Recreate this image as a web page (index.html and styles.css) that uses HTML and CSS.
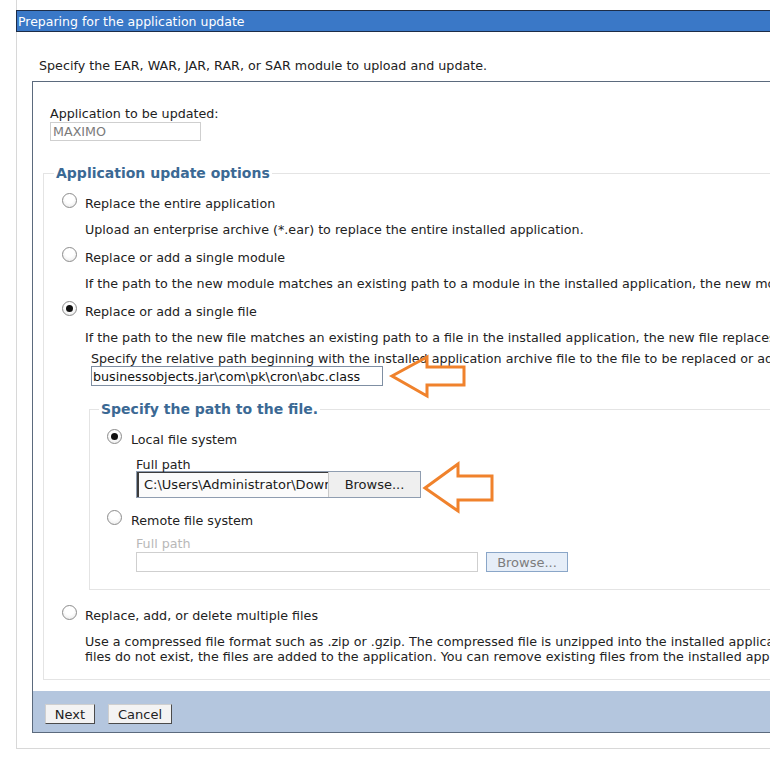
FILE: index.html
```html
<!DOCTYPE html>
<html lang="en">
<head>
    <meta charset="UTF-8">
    <title>Preparing for the application update</title>
    <link rel="stylesheet" href="styles.css">
</head>
<body>

    <div class="frame">
        <div class="title-bar">Preparing for the application update</div>

        <p class="intro">Specify the EAR, WAR, JAR, RAR, or SAR module to upload and update.</p>

        <div class="panel">
            <div class="panel-body">
                <label class="field-label">Application to be updated:</label>
                <input type="text" class="app-name" value="MAXIMO" disabled>

                <fieldset class="group">
                    <legend>Application update options</legend>

                    <div class="option first">
                        <div class="option-head">
                            <input type="radio" name="updateType" class="radio">
                            <span>Replace the entire application</span>
                        </div>
                        <div class="option-desc">Upload an enterprise archive (*.ear) to replace the entire installed application.</div>
                    </div>

                    <div class="option">
                        <div class="option-head">
                            <input type="radio" name="updateType" class="radio">
                            <span>Replace or add a single module</span>
                        </div>
                        <div class="option-desc">If the path to the new module matches an existing path to a module in the installed application, the new module replaces the existing module.</div>
                    </div>

                    <div class="option">
                        <div class="option-head">
                            <input type="radio" name="updateType" class="radio" checked>
                            <span>Replace or add a single file</span>
                        </div>
                        <div class="option-desc">If the path to the new file matches an existing path to a file in the installed application, the new file replaces the existing file.</div>

                        <div class="sub-field">
                            <div class="sub-label">Specify the relative path beginning with the installed application archive file to the file to be replaced or added.</div>
                            <input type="text" class="rel-path" value="businessobjects.jar\com\pk\cron\abc.class">
                        </div>

                        <fieldset class="group inner">
                            <legend>Specify the path to the file.</legend>

                            <div class="option-head source first">
                                <input type="radio" name="source" class="radio" checked>
                                <span>Local file system</span>
                            </div>
                            <div class="path-field">
                                <div class="path-label">Full path</div>
                                <div class="file-input">
                                    <span class="file-name">C:\Users\Administrator\Downloads\abc.class</span>
                                    <span class="file-browse">Browse...</span>
                                </div>
                            </div>

                            <div class="option-head source">
                                <input type="radio" name="source" class="radio">
                                <span>Remote file system</span>
                            </div>
                            <div class="path-field disabled">
                                <div class="path-label">Full path</div>
                                <div class="remote-row">
                                    <input type="text" class="remote-path" disabled>
                                    <button class="remote-browse" disabled>Browse...</button>
                                </div>
                            </div>
                        </fieldset>
                    </div>

                    <div class="option multi">
                        <div class="option-head">
                            <input type="radio" name="updateType" class="radio">
                            <span>Replace, add, or delete multiple files</span>
                        </div>
                        <div class="option-desc">
                            <span class="line">Use a compressed file format such as .zip or .gzip. The compressed file is unzipped into the installed application directory. If the</span>
                            <span class="line">files do not exist, the files are added to the application. You can remove existing files from the installed application by specifying metadata.</span>
                        </div>
                    </div>
                </fieldset>
            </div>

            <div class="panel-footer">
                <button class="btn next">Next</button>
                <button class="btn cancel">Cancel</button>
            </div>
        </div>
    </div>

    <!-- annotation arrows drawn over the screenshot -->
    <svg class="callouts" width="770" height="767" viewBox="0 0 770 767">
        <polygon points="392,376 427,357 427,367 464,367 464,385 427,385 427,396" />
        <polygon points="425,488 458,464 458,476 492,476 492,500 458,500 458,511" />
    </svg>

</body>
</html>
```

FILE: styles.css
```css
html, body {
    overflow: hidden;
}

body {
    margin: 0;
    font-family: "DejaVu Sans", Verdana, sans-serif;
    font-size: 12.7px;
    line-height: 15px;
    color: #222;
    background-color: #fff;
    position: relative;
}

.frame {
    width: 1200px;
    margin-left: 16px;
    padding-top: 10px;
    padding-bottom: 15px;
    border-left: 1px solid #d8d8d8;
    border-bottom: 1px solid #d8d8d8;
}

.title-bar {
    margin-left: -1px;
    height: 20px;
    line-height: 21px;
    padding-left: 1px;
    background-color: #3a78c7;
    border: 1px solid #1d2d47;
    color: #fff;
    font-size: 12.5px;
}

.intro {
    margin: 26px 0 8px 22px;
}

.panel {
    margin-left: 15px;
    border: 1px solid #5b6a7d;
    background-color: #fff;
}

.panel-body {
    padding: 24px 0 11px 17px;
}

.field-label {
    display: block;
}

.app-name {
    display: block;
    box-sizing: border-box;
    width: 151px;
    height: 19px;
    margin: 1px 0 0;
    padding: 0 2px;
    border: 1px solid #cfcfcf;
    background-color: #fff;
    font-family: inherit;
    font-size: 12.7px;
    color: #7a7a7a;
}

.group {
    margin: 23px 0 0 -7px;
    padding: 0 0 15px 10px;
    border: 1px solid #e4e4e4;
    border-right: none;
}

.group legend {
    padding: 0 2px;
    font-size: 14px;
    font-weight: bold;
    line-height: 18px;
    color: #3b6994;
}

.option {
    padding-left: 8px;
    margin-top: 13px;
}

.option.first {
    margin-top: 14px;
}

.option-head {
    display: flex;
    align-items: flex-start;
    gap: 8px;
    white-space: nowrap;
}

.radio {
    appearance: none;
    -webkit-appearance: none;
    flex: none;
    box-sizing: border-box;
    width: 15px;
    height: 15px;
    margin: -3px 0 0;
    border: 1px solid #8c8c8c;
    border-radius: 50%;
    background: radial-gradient(circle at 50% 35%, #fff 40%, #e6e6e6 100%);
    position: relative;
}

.radio:checked::after {
    content: "";
    position: absolute;
    left: 3px;
    top: 3px;
    width: 7px;
    height: 7px;
    border-radius: 50%;
    background-color: #111;
}

.option-desc {
    margin-top: 11px;
    padding-left: 23px;
    white-space: nowrap;
}

.option-desc .line {
    display: block;
}

.sub-field {
    margin-top: 7px;
    padding-left: 29px;
}

.sub-label {
    white-space: nowrap;
    line-height: 14px;
}

.rel-path {
    display: block;
    box-sizing: border-box;
    width: 292px;
    height: 20px;
    margin: 0;
    padding: 0 1px;
    border: 1px solid #7f8fa3;
    font-family: inherit;
    font-size: 12.7px;
    color: #111;
}

.group.inner {
    margin: 14px 0 0 27px;
    padding: 0 0 17px 9px;
}

.option-head.source {
    padding-left: 8px;
    gap: 9px;
    margin-top: 15px;
}

.option-head.source.first {
    margin-top: 14px;
}

.path-field {
    padding-left: 37px;
    margin-top: 10px;
}

.path-field.disabled {
    margin-top: 8px;
}

.path-field.disabled .path-label {
    color: #b8b8b8;
}

.file-input {
    display: flex;
    width: 285px;
    height: 27px;
    margin-top: -1px;
    box-sizing: border-box;
    border: 1px solid #8f9db0;
}

.file-name {
    flex: none;
    width: 191px;
    box-sizing: border-box;
    padding-left: 5px;
    line-height: 24px;
    overflow: hidden;
    white-space: nowrap;
    border-left: 2px solid #3c3c3c;
    border-top: 1px solid #3c3c3c;
    background-color: #fbfbfb;
    font-size: 13px;
    color: #1a1a1a;
}

.file-browse {
    flex: 1;
    text-align: center;
    line-height: 25px;
    background-color: #efefef;
    border-left: 1px solid #c9c9c9;
    font-size: 13px;
}

.remote-row {
    display: flex;
    gap: 8px;
    margin-top: 1px;
}

.remote-path {
    box-sizing: border-box;
    width: 342px;
    height: 20px;
    margin: 0;
    border: 1px solid #cfcfcf;
    background-color: #fff;
}

.remote-browse {
    box-sizing: border-box;
    width: 82px;
    height: 20px;
    padding: 0;
    border: 1px solid #8aa6c8;
    background-color: #e6eef8;
    font-family: inherit;
    font-size: 13px;
    color: #7d7d7d;
}

.option.multi {
    margin-top: 18px;
}

.panel-footer {
    display: flex;
    gap: 13px;
    height: 41px;
    box-sizing: border-box;
    padding: 13px 0 0 12px;
    background-color: #b4c6de;
}

.btn {
    height: 20px;
    padding: 0;
    background-color: #f3f3f3;
    border: 1px solid #cfcfcf;
    border-right-color: #4b4b4b;
    border-bottom-color: #4b4b4b;
    font-family: inherit;
    font-size: 13px;
    color: #222;
}

.btn.next {
    width: 50px;
}

.btn.cancel {
    width: 64px;
}

.callouts {
    position: absolute;
    top: 0;
    left: 0;
    pointer-events: none;
}

.callouts polygon {
    fill: none;
    stroke: #f0822c;
    stroke-width: 3;
    stroke-linejoin: miter;
}
```
